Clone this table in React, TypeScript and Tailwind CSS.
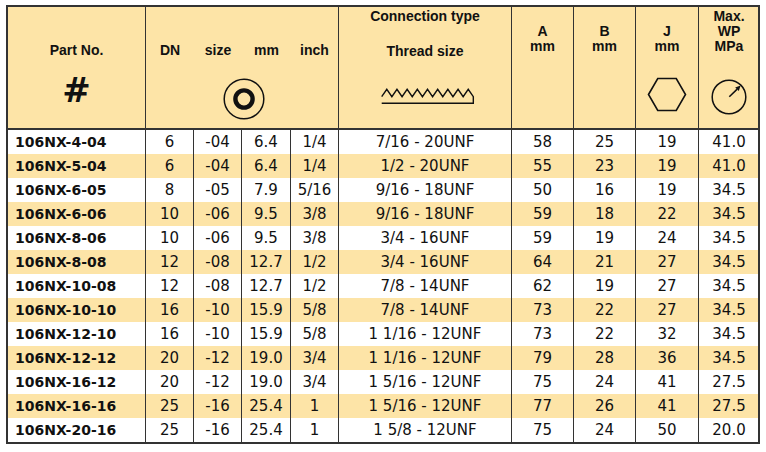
import React from "react";

const rows: string[][] = [
  ["106NX-4-04", "6", "-04", "6.4", "1/4", "7/16 - 20UNF", "58", "25", "19", "41.0"],
  ["106NX-5-04", "6", "-04", "6.4", "1/4", "1/2 - 20UNF", "55", "23", "19", "41.0"],
  ["106NX-6-05", "8", "-05", "7.9", "5/16", "9/16 - 18UNF", "50", "16", "19", "34.5"],
  ["106NX-6-06", "10", "-06", "9.5", "3/8", "9/16 - 18UNF", "59", "18", "22", "34.5"],
  ["106NX-8-06", "10", "-06", "9.5", "3/8", "3/4 - 16UNF", "59", "19", "24", "34.5"],
  ["106NX-8-08", "12", "-08", "12.7", "1/2", "3/4 - 16UNF", "64", "21", "27", "34.5"],
  ["106NX-10-08", "12", "-08", "12.7", "1/2", "7/8 - 14UNF", "62", "19", "27", "34.5"],
  ["106NX-10-10", "16", "-10", "15.9", "5/8", "7/8 - 14UNF", "73", "22", "27", "34.5"],
  ["106NX-12-10", "16", "-10", "15.9", "5/8", "1 1/16 - 12UNF", "73", "22", "32", "34.5"],
  ["106NX-12-12", "20", "-12", "19.0", "3/4", "1 1/16 - 12UNF", "79", "28", "36", "34.5"],
  ["106NX-16-12", "20", "-12", "19.0", "3/4", "1 5/16 - 12UNF", "75", "24", "41", "27.5"],
  ["106NX-16-16", "25", "-16", "25.4", "1", "1 5/16 - 12UNF", "77", "26", "41", "27.5"],
  ["106NX-20-16", "25", "-16", "25.4", "1", "1 5/8 - 12UNF", "75", "24", "50", "20.0"],
];

function threadPath() {
  const x0 = 1.7;
  const p = 10.18;
  let d = `M${x0} 10.7`;
  for (let i = 0; i < 9; i++) {
    d += ` L${(x0 + p * i + p / 2).toFixed(2)} 3.3 L${(x0 + p * (i + 1)).toFixed(2)} 10.7`;
  }
  const xe = (x0 + p * 9).toFixed(2);
  d += ` L${xe} 17.3 L${x0} 17.3`;
  return d;
}

function ThreadIcon() {
  return (
    <svg width="96" height="20" viewBox="0 0 96 20">
      <path d={threadPath()} fill="none" stroke="#111" strokeWidth="1.4" strokeLinejoin="miter" />
    </svg>
  );
}

function RingIcon() {
  return (
    <svg width="46" height="46" viewBox="0 0 46 46">
      <circle cx="23" cy="23" r="19.8" fill="none" stroke="#111" strokeWidth="1.5" />
      <circle cx="23" cy="23" r="8.6" fill="none" stroke="#111" strokeWidth="4.4" />
    </svg>
  );
}

function HexIcon() {
  return (
    <svg width="40" height="35" viewBox="0 0 40 35">
      <polygon
        points="1.5,17.5 10.75,1.5 29.25,1.5 38.5,17.5 29.25,33.5 10.75,33.5"
        fill="none"
        stroke="#111"
        strokeWidth="1.6"
      />
    </svg>
  );
}

function GaugeIcon() {
  return (
    <svg width="38" height="38" viewBox="0 0 38 38">
      <circle cx="19" cy="19" r="16.8" fill="none" stroke="#111" strokeWidth="1.5" />
      <line x1="19.3" y1="18.7" x2="27.2" y2="11.1" stroke="#111" strokeWidth="1.5" />
      <polygon points="30.6,7.6 28.8,13.1 25.2,9.5" fill="#111" />
    </svg>
  );
}

const gridCols =
  "grid grid-cols-[138px_48px_48px_49px_48px_173px_62px_62px_63px_60px]";

export default function App() {
  return (
    <div className="w-[766px] h-[452px] bg-white pt-[5px] pl-[6px] text-[#111] [font-family:'Liberation_Sans',Arial,sans-serif]">
      <div className="w-[754px] border-2 border-[#333]">
        {/* Header */}
        <div className={`${gridCols} h-[123px] bg-[#FDE4A7] border-b-2 border-[#333] text-[14px] font-bold leading-[15px]`}>
          <div className="border-r border-[#333] flex flex-col items-center">
            <div className="mt-[36px]">Part No.</div>
            <div className="mt-[15px] text-[34px] leading-[34px] [font-family:'DejaVu_Sans',sans-serif]">#</div>
          </div>
          <div className="col-span-4 border-r border-[#333] flex flex-col items-center">
            <div className="mt-[36px] w-full grid grid-cols-[48px_48px_49px_47px] text-center">
              <div>DN</div>
              <div>size</div>
              <div>mm</div>
              <div>inch</div>
            </div>
            <div className="mt-[18px] ml-[4px]">
              <RingIcon />
            </div>
          </div>
          <div className="border-r border-[#333] flex flex-col items-center">
            <div className="mt-[1.5px]">Connection type</div>
            <div className="mt-[20px]">Thread size</div>
            <div className="mt-[27px] ml-[5px]">
              <ThreadIcon />
            </div>
          </div>
          <div className="border-r border-[#333] flex flex-col items-center">
            <div className="mt-[17px]">A</div>
            <div>mm</div>
          </div>
          <div className="border-r border-[#333] flex flex-col items-center">
            <div className="mt-[17px]">B</div>
            <div>mm</div>
          </div>
          <div className="border-r border-[#333] flex flex-col items-center">
            <div className="mt-[17px]">J</div>
            <div>mm</div>
            <div className="mt-[23px]">
              <HexIcon />
            </div>
          </div>
          <div className="flex flex-col items-center">
            <div className="mt-[2px]">Max.</div>
            <div>WP</div>
            <div>MPa</div>
            <div className="mt-[24px]">
              <GaugeIcon />
            </div>
          </div>
        </div>
        {/* Body */}
        {rows.map((r, i) => (
          <div
            key={r[0]}
            className={`${gridCols} h-[24px] ${i % 2 === 1 ? "bg-[#FDE4A7]" : "bg-white"} text-[15px] leading-[24px] [font-family:'DejaVu_Sans',sans-serif]`}
          >
            {r.map((c, j) => (
              <div
                key={j}
                className={
                  j === 0
                    ? "border-r border-[#333] pl-[7px] font-bold text-[14px] whitespace-nowrap"
                    : j === 9
                    ? "text-center whitespace-nowrap"
                    : "border-r border-[#333] text-center whitespace-nowrap"
                }
              >
                {c}
              </div>
            ))}
          </div>
        ))}
      </div>
    </div>
  );
}
